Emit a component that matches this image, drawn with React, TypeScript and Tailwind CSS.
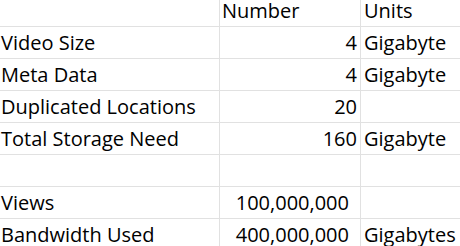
import React from "react";

type Row = { a: string; b: string; c: string; padded?: boolean };

const rows: Row[] = [
  { a: "", b: "Number", c: "Units" },
  { a: "Video Size", b: "4", c: "Gigabyte" },
  { a: "Meta Data", b: "4", c: "Gigabyte" },
  { a: "Duplicated Locations", b: "20", c: "" },
  { a: "Total Storage Need", b: "160", c: "Gigabyte" },
  { a: "", b: "", c: "" },
  { a: "Views", b: "100,000,000", c: "", padded: true },
  { a: "Bandwidth Used", b: "400,000,000", c: "Gigabytes", padded: true },
];

export default function App() {
  return (
    <div
      className="w-[460px] h-[246px] overflow-hidden bg-white text-black text-[20px] leading-none"
      style={{ fontFamily: '"Open Sans", sans-serif' }}
    >
      {rows.map((r, i) => (
        <div
          key={i}
          className={`grid grid-cols-[220px_141px_1fr] border-b border-[#e1e1e1] ${i === 0 ? "h-[27px]" : "h-[32px]"}`}
        >
          <div className="border-r border-[#e1e1e1] flex items-end pl-[1px] pb-[5px] whitespace-nowrap">{r.a}</div>
          <div
            className={`border-r border-[#e1e1e1] flex items-end pb-[5px] whitespace-nowrap ${
              i === 0 ? "pl-[2px]" : r.padded ? "justify-end pr-[11px]" : "justify-end pr-[3px]"
            }`}
          >
            {r.b}
          </div>
          <div className="flex items-end pl-[3px] pb-[5px] whitespace-nowrap">{r.c}</div>
        </div>
      ))}
    </div>
  );
}
